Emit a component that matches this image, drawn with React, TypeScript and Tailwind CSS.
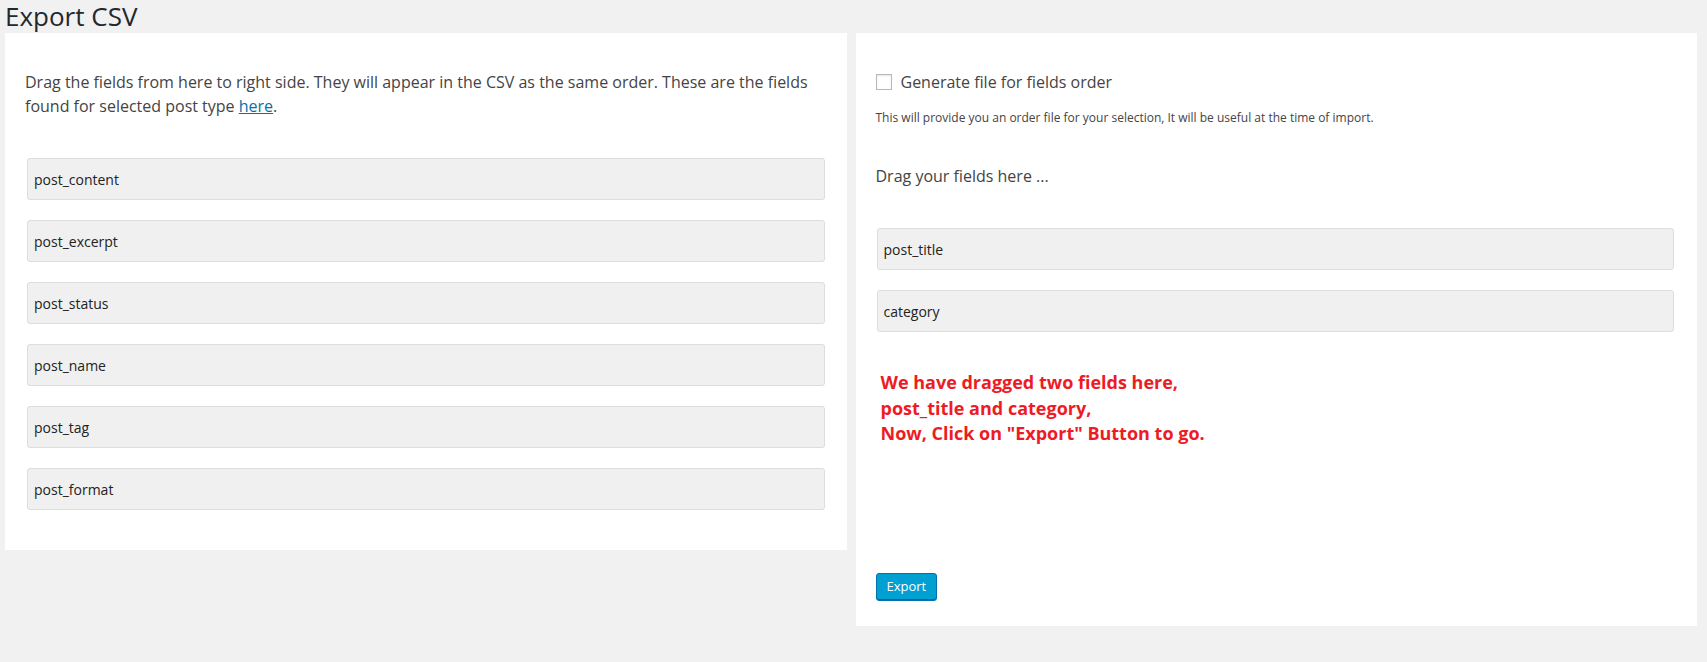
import React from 'react'

const leftFields = ['post_content', 'post_excerpt', 'post_status', 'post_name', 'post_tag', 'post_format']
const rightFields = ['post_title', 'category']

function FieldBox({ name }: { name: string }) {
  return (
    <div className="h-[42px] flex items-center px-[6px] bg-[#f0f0f0] border border-[#dddddd] rounded-[3px] text-[14px] text-[#222]">
      {name}
    </div>
  )
}

export default function App() {
  return (
    <div
      className="min-h-[662px] bg-[#f1f1f1] text-[#444]"
      style={{ fontFamily: '"Open Sans", "Liberation Sans", sans-serif' }}
    >
      <h1 className="pl-[5px] text-[26px] leading-[33px] font-normal text-[#23282d]">Export CSV</h1>

      <div className="pl-[5px] pr-[10px] grid grid-cols-2 gap-[9px] items-start">
        {/* left: available fields */}
        <div className="bg-white pt-[37px] pb-[40px]">
          <p className="px-[20px] text-[16px] leading-[24px]">
            Drag the fields from here to right side. They will appear in the CSV as the same order. These are the fields
            found for selected post type <a href="#" className="text-[#0073aa] underline">here</a>.
          </p>
          <div className="mt-[40px] pl-[22px] pr-[22px] flex flex-col gap-[20px]">
            {leftFields.map(f => (
              <FieldBox key={f} name={f} />
            ))}
          </div>
        </div>

        {/* right: drop zone */}
        <div className="bg-white pt-[37px] pb-[25px]">
          <label className="px-[20px] flex items-center gap-[9px] text-[16px] leading-[24px]">
            <span className="w-[16px] h-[16px] border border-[#b4b9be] bg-white shadow-[inset_0_1px_2px_rgba(0,0,0,0.1)]" />
            Generate file for fields order
          </label>
          <p className="mt-[16px] px-[20px] text-[12px] leading-[16px] text-[#444]">
            This will provide you an order file for your selection, It will be useful at the time of import.
          </p>
          <p className="mt-[38px] px-[20px] text-[16px] leading-[24px]">Drag your fields here ...</p>
          <div className="mt-[40px] pl-[21px] pr-[23px] flex flex-col gap-[20px]">
            {rightFields.map(f => (
              <FieldBox key={f} name={f} />
            ))}
          </div>
          <div className="mt-[38px] pl-[25px] text-[18px] leading-[25.5px] font-bold text-[#ed1c24]">
            We have dragged two fields here,
            <br />
            post_title and category,
            <br />
            Now, Click on "Export" Button to go.
          </div>
          <div className="mt-[126px] px-[20px]">
            <button className="h-[28px] px-[10px] text-[13px] text-white bg-[#00a0d2] border border-[#0073aa] rounded-[3px] shadow-[inset_0_-1px_0_#006799]">
              Export
            </button>
          </div>
        </div>
      </div>
    </div>
  )
}
